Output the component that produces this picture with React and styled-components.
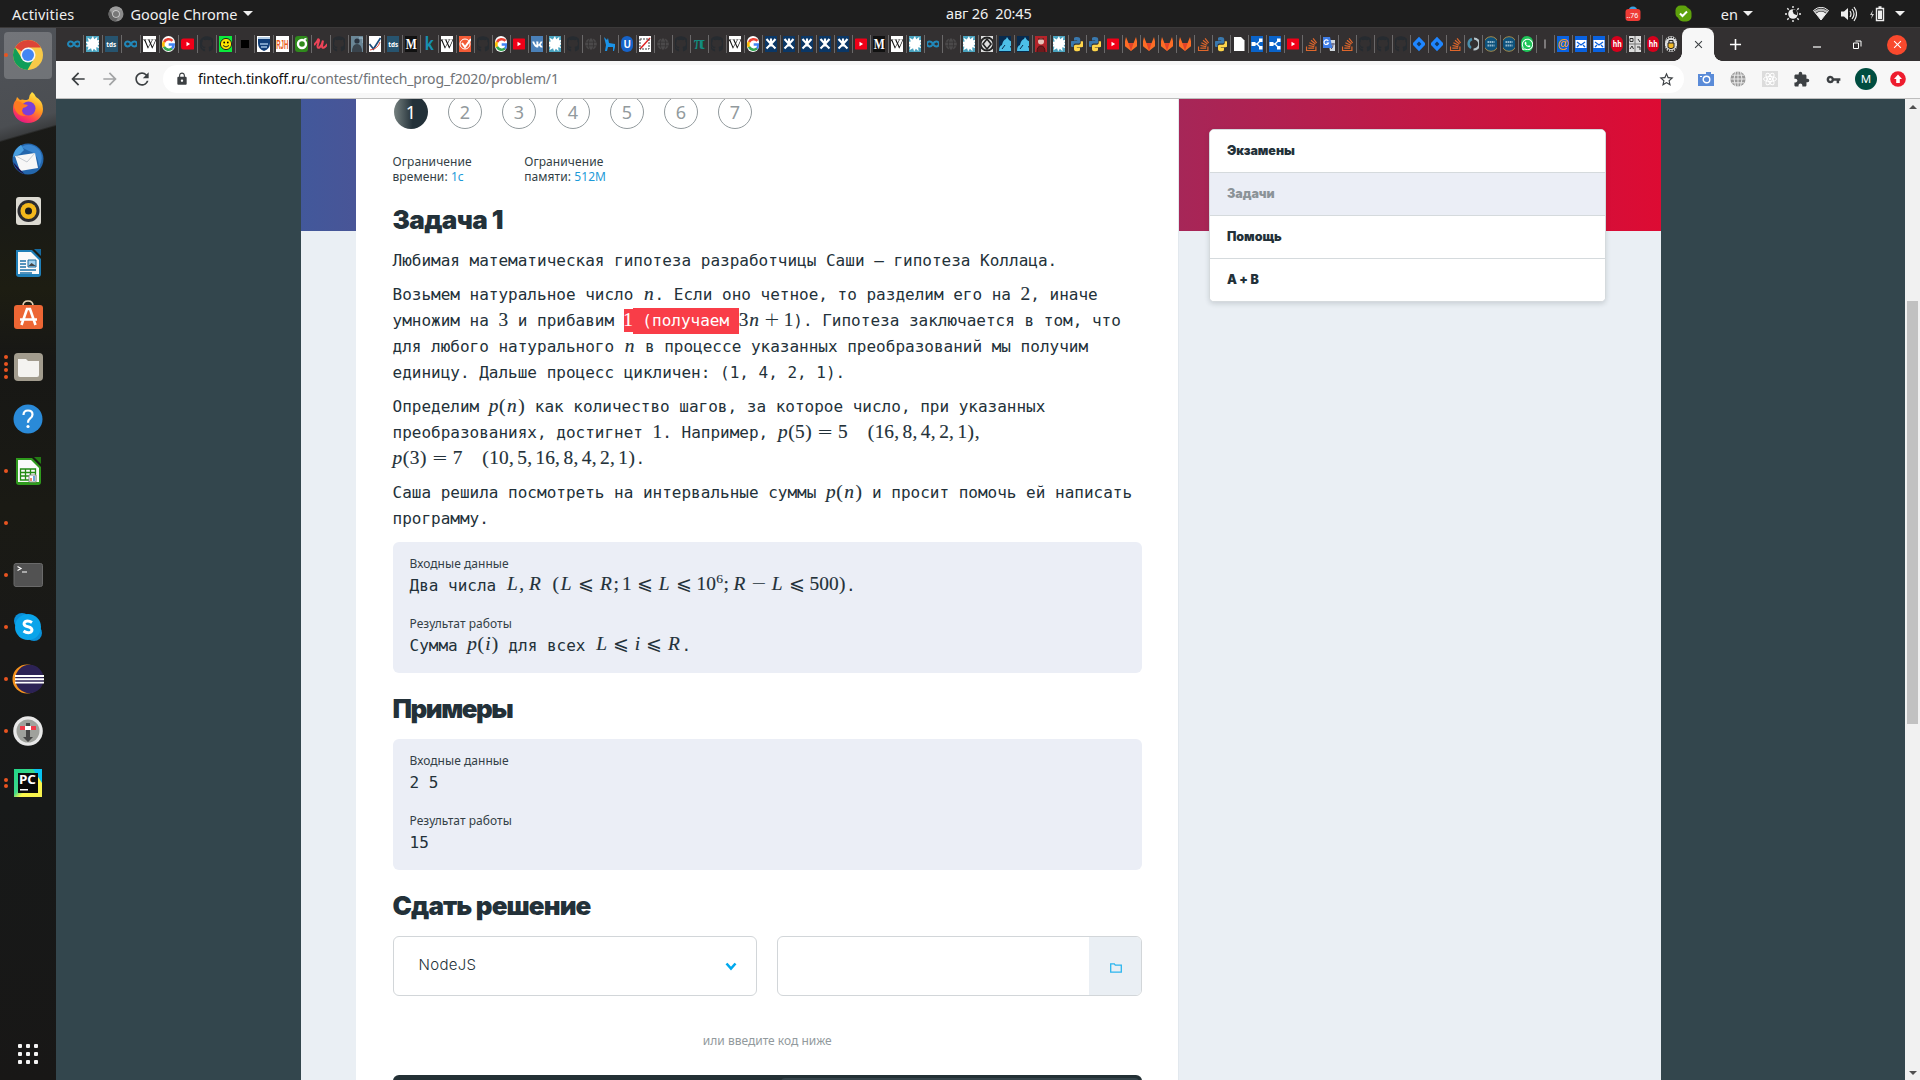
import React from "react";
import styled, { createGlobalStyle, css } from "styled-components";
import {
  FaGithub, FaWhatsapp, FaStackOverflow, FaVk, FaWikipediaW, FaGlobe, FaInfinity,
} from "react-icons/fa";
import {
  MdArrowBack, MdArrowForward, MdRefresh, MdLock, MdStarBorder, MdExtension, MdVpnKey, MdClose, MdAdd,
} from "react-icons/md";

const ui = '"Noto Sans", "Open Sans", sans-serif';
const mono = '"DejaVu Sans Mono", monospace';
const display = 'Inter, "Open Sans", sans-serif';
const serif = '"Liberation Serif", "DejaVu Serif", serif';

const GlobalStyle = createGlobalStyle`
  * { box-sizing: border-box; }
  html, body { margin: 0; padding: 0; overflow: hidden; }
  body { font-family: ${ui}; color: #233139; background: #33464d; }
`;

const Screen = styled.div`
  width: 1920px;
  height: 1080px;
  display: flex;
  flex-direction: column;
  overflow: hidden;
`;

/* ---------- top system bar ---------- */

const TopBar = styled.header`
  height: 28px;
  flex: none;
  display: grid;
  grid-template-columns: 946px auto 1fr;
  background: #1d1d1d;
  border-bottom: 1px solid #3b3939;
  color: #f0f0f0;
  font-size: 14.5px;
  line-height: 26px;
`;
const TopLeft = styled.div`
  display: flex;
  align-items: center;
  padding-left: 12px;
`;
const TopText = styled.span`
  letter-spacing: ${(p) => p.$ls || 0}px;
  margin-left: ${(p) => p.$ml || 0}px;
  white-space: pre;
`;
const TopRight = styled.div`
  display: flex;
  align-items: center;
  justify-content: flex-end;
  padding-right: 15px;
`;
const Slot = styled.span`
  display: flex;
  justify-content: center;
  width: ${(p) => p.$w}px;
  margin-left: ${(p) => p.$ml || 0}px;
  flex: none;
`;
const Caret = styled.i`
  border: 5px solid transparent;
  border-top: 5.5px solid #f0f0f0;
  border-bottom: 0;
  margin-left: ${(p) => p.$ml || 0}px;
`;

/* ---------- dock ---------- */

const Body = styled.div`
  flex: 1;
  display: flex;
  min-height: 0;
`;
const Dock = styled.nav`
  width: 56px;
  flex: none;
  display: flex;
  flex-direction: column;
  padding: 1px 0 12px;
  background:
    linear-gradient(164deg, #505359 0, #4b4e52 96px, #3b3d3f 108px, transparent 110px),
    linear-gradient(#1c1b1a 0, #191a16 180px, #1d1d12 260px, #171715 330px, #1a1a14 480px, #191918 620px, #171919 780px, #181716 100%);
`;
const DockCell = styled.div`
  height: 52px;
  position: relative;
  display: flex;
  align-items: center;
  justify-content: center;
  &::before {
    content: "";
    position: absolute;
    inset: 3px 4px 2px;
    border-radius: 4px;
    background: ${(p) => (p.$active ? "rgba(255,255,255,.2)" : "transparent")};
  }
  svg { position: relative; }
`;
const DockDots = styled.div`
  position: absolute;
  left: 4px;
  top: 0;
  bottom: 0;
  display: flex;
  flex-direction: column;
  justify-content: center;
  gap: 2.2px;
  i { width: 4.4px; height: 4.4px; border-radius: 50%; background: #e95420; }
`;
const AppGrid = styled.div`
  margin: auto auto 4px;
  display: grid;
  grid-template-columns: repeat(3, 4px);
  gap: 4px;
  i { height: 4px; border-radius: 1px; background: #f4f4f4; }
`;

/* ---------- browser chrome ---------- */

const Browser = styled.div`
  flex: 1;
  display: flex;
  flex-direction: column;
  min-width: 0;
`;
const TabStrip = styled.div`
  height: 33px;
  flex: none;
  display: flex;
  align-items: flex-start;
  padding-left: 9px;
  background: #333031;
`;
const TabBox = styled.div`
  width: ${(p) => p.$w}px;
  height: 18px;
  margin-top: 7px;
  flex: none;
  display: flex;
  justify-content: center;
  align-items: center;
  border-right: 1px solid ${(p) => (p.$last ? "transparent" : "#6b696a")};
`;
const Fav = styled.span`
  width: ${(p) => p.$w}px;
  height: 16px;
  margin-right: 1px;
  overflow: hidden;
  display: flex;
  align-items: center;
  justify-content: center;
  flex: none;
  border-radius: ${(p) => p.$r || 0}px;
  background: ${(p) => p.$bg || "transparent"};
  color: ${(p) => p.$c || "#fff"};
  font: ${(p) => p.$font || `700 8px/16px ${ui}`};
  svg { flex: none; display: block; }
`;
const ActiveTab = styled.div`
  width: 32px;
  height: 33px;
  margin-left: 1px;
  flex: none;
  position: relative;
  display: flex;
  align-items: center;
  justify-content: center;
  background: #f7f7f7;
  border-radius: 8px 8px 0 0;
  color: #3c4043;
  &::before, &::after {
    content: "";
    position: absolute;
    bottom: 0;
    width: 8px;
    height: 8px;
  }
  &::before { left: -8px; background: radial-gradient(circle at 0 0, transparent 7.5px, #f7f7f7 8px); }
  &::after { right: -8px; background: radial-gradient(circle at 100% 0, transparent 7.5px, #f7f7f7 8px); }
`;
const NewTab = styled.div`
  width: 43px;
  height: 33px;
  display: flex;
  align-items: center;
  justify-content: center;
  color: #fff;
`;
const WindowButtons = styled.div`
  height: 33px;
  margin-left: auto;
  padding-right: 13px;
  display: flex;
  align-items: center;
  color: #fff;
`;
const Close = styled.span`
  width: 20px;
  height: 20px;
  border-radius: 50%;
  display: flex;
  align-items: center;
  justify-content: center;
  background: #f9492d;
  color: #fff;
`;

const Toolbar = styled.div`
  height: 38px;
  flex: none;
  display: flex;
  align-items: center;
  padding: 0 0 1px 12px;
  background: #f7f7f7;
  border-bottom: 1px solid #bdbdbd;
  color: #3c4043;
`;
const NavButton = styled.span`
  width: 32px;
  height: 20px;
  flex: none;
  display: flex;
  justify-content: flex-start;
  opacity: ${(p) => (p.$off ? 0.45 : 1)};
`;
const Omnibox = styled.div`
  width: 1521px;
  height: 28px;
  flex: none;
  margin-left: -1px;
  border-radius: 14px;
  background: #fff;
  display: flex;
  align-items: center;
  padding: 0 9px 0 12px;
  font-size: 14px;
  line-height: 28px;
`;
const Url = styled.span`
  flex: 1;
  margin-left: 9px;
  color: #6f7377;
  letter-spacing: -0.15px;
  b { font-weight: 400; color: #111; }
`;
const Ext = styled.span`
  width: ${(p) => p.$w || 32}px;
  display: flex;
  align-items: center;
  justify-content: center;
  flex: none;
`;
const Avatar = styled.span`
  width: 22px;
  height: 22px;
  border-radius: 50%;
  background: #004d40;
  color: #fff;
  font-size: 11.5px;
  line-height: 22px;
  text-align: center;
`;

/* ---------- page ---------- */

const View = styled.main`
  flex: 1;
  display: flex;
  min-height: 0;
  background: #33464d;
`;
const Site = styled.div`
  width: 1360px;
  margin-left: 245px;
  display: flex;
  background:
    linear-gradient(90deg, #42589b, #dd0b33) no-repeat 0 0 / 100% 132px,
    #eaeff4;
  overflow: hidden;
`;
const Article = styled.article`
  width: 823px;
  margin-left: 55px;
  padding: 0 37px 0 36.5px;
  background: #fff;
  border-right: 1px solid #e2e8ee;
  flex: none;
`;
const Steps = styled.div`
  display: flex;
  gap: 20px;
  margin: -4px 0 0 1.5px;
`;
const Step = styled.span`
  width: 34px;
  height: 34px;
  border-radius: 50%;
  border: 1px solid ${(p) => (p.$on ? "transparent" : "#929a9d")};
  background: ${(p) => (p.$on ? "linear-gradient(90deg, #75807f, #233139 55%) border-box" : "#fff")};
  color: ${(p) => (p.$on ? "#fff" : "#929a9d")};
  font-size: 18px;
  line-height: 32px;
  text-align: center;
`;
const Limits = styled.div`
  display: flex;
  margin-top: 25px;
  font-size: 12px;
  line-height: 15px;
  letter-spacing: 0.08px;
  color: #333f46;
  div { width: 131.7px; }
  em { font-style: normal; color: #1d9ad8; }
`;
const Title = styled.h2`
  margin: ${(p) => p.$mt}px 0 ${(p) => p.$mb || 0}px;
  font: 900 26px/32px ${display};
  letter-spacing: ${(p) => p.$ls}px;
  color: #233139;
  white-space: nowrap;
`;
const Para = styled.p`
  margin: 0 0 8px;
  font: 16px/26px ${mono};
  color: #233139;
`;
const Line = styled.span`
  display: block;
  height: 26px;
  white-space: pre;
`;
const Marked = styled.span`
  display: inline-block;
  height: 26px;
  vertical-align: top;
  background: #f93d48;
  color: #fff;
`;
const MarkedDigit = styled.span`
  display: inline-block;
  height: 23px;
  width: 9px;
  margin-top: 1px;
  vertical-align: top;
  background: #f93d48;
  color: #fff;
  > span { margin: -1px 0 0 -0.5px; }
`;
const MathBox = styled.span`
  display: inline-block;
  height: 26px;
  vertical-align: top;
  font: 19.36px/24px ${serif};
  -webkit-text-stroke: 0.15px currentColor;
`;
const Atom = styled.span`
  display: inline-block;
  width: ${(p) => p.$w}em;
  text-align: center;
  height: 26px;
  vertical-align: top;
  ${(p) => p.$it && css`font-style: italic;`}
  ${(p) => p.$op && css`font-size: 19.36px; font-family: "DejaVu Sans", sans-serif; font-weight: 200; -webkit-text-stroke: 0;`}
  ${(p) => p.$sup && css`font-size: 13.5px; width: 0.57em; line-height: 13px;`}
`;
const Gap = styled.span`
  display: inline-block;
  width: ${(p) => p.$w}em;
`;

const Box = styled.section`
  height: 131px;
  margin-top: ${(p) => p.$mt}px;
  width: 749.5px;
  border-radius: 6px;
  background: #ebeef6;
  padding: 14px 17px 0;
`;
const Field = styled.div`
  height: 60px;
`;
const Label = styled.div`
  font-size: 12px;
  line-height: 16px;
  letter-spacing: 0.05px;
  color: #333f46;
`;
const Value = styled.div`
  font: 16px/28px ${mono};
  height: 26px;
  white-space: pre;
`;
const Controls = styled.div`
  display: flex;
  gap: 20px;
  width: 749.5px;
  margin-top: 14px;
`;
const Input = styled.div`
  flex: 1;
  height: 60px;
  display: flex;
  align-items: center;
  border: 1px solid #d2d6d9;
  border-radius: 6px;
  background: #fff;
  overflow: hidden;
`;
const Selected = styled.span`
  flex: 1;
  padding-left: 25px;
  font: 300 15px/58px ${display};
  letter-spacing: 0.3px;
  margin-top: -3px;
  color: #233139;
`;
const Chevron = styled.span`
  width: 51px;
  display: flex;
  justify-content: center;
  padding-top: 1px;
`;
const FileButton = styled.span`
  margin-left: auto;
  width: 52px;
  height: 58px;
  background: #eaeff4;
  display: flex;
  align-items: center;
  justify-content: center;
  padding: 3px 0 0 2px;
`;
const Hint = styled.div`
  margin-top: 37px;
  width: 749.5px;
  text-align: center;
  font-size: 12px;
  line-height: 16px;
  color: #929a9d;
`;
const Editor = styled.div`
  margin-top: 26px;
  width: 749.5px;
  height: 60px;
  border-radius: 6px;
  background: #233035;
  padding: 3px 3px 0 388px;
  overflow: hidden;
`;
const EditorPanel = styled.div`
  height: 60px;
  border-radius: 4px 4px 0 0;
  background: #35434a;
`;

const Menu = styled.ul`
  width: 397px;
  height: 173px;
  margin: 30px 0 0 30px;
  padding: 0;
  list-style: none;
  border: 1px solid #d5dadd;
  border-radius: 5px;
  overflow: hidden;
  background: #fff;
  box-shadow: 0 2px 5px rgba(35, 49, 57, 0.16);
`;
const MenuItem = styled.li`
  height: 43px;
  padding-left: 17px;
  border-bottom: 1px solid #d5dadd;
  font: 900 12.5px/42px ${display};
  letter-spacing: -0.05px;
  background: ${(p) => (p.$on ? "#ebeef6" : "#fff")};
  color: ${(p) => (p.$on ? "#8b9398" : "#233139")};
  &:last-child { border-bottom: 0; }
`;
const Scroll = styled.div`
  width: 15px;
  margin-left: auto;
  background: #f1f1f1;
  display: flex;
  flex-direction: column;
  align-items: center;
  padding: 6px 0 5px;
`;
const Tri = styled.i`
  border: 4px solid transparent;
  ${(p) => (p.$up ? "border-bottom-color: #505050; border-top: 0;" : "border-top-color: #505050; border-bottom: 0; margin-top: auto;")}
`;
const Thumb = styled.div`
  width: 11px;
  height: 423px;
  margin-top: 192px;
  background: #c1c1c1;
`;

/* ---------- favicons ---------- */

const Svg = ({ s = 16, children, vb = "0 0 16 16" }) => (
  <svg width={s} height={s} viewBox={vb}>{children}</svg>
);
const Word = ({ children, size, y, w, family = "Liberation Sans" }) => (
  <svg width="12.500" height="16" viewBox="0 0 12.500 16">
    <text x={(12.5 - w) / 2} y={y} fontSize={size} fontWeight="700" fontFamily={family} fill="currentColor" textLength={w} lengthAdjust="spacingAndGlyphs">{children}</text>
  </svg>
);
const favs = {
  oo: { el: <FaInfinity size={14} color="#2287b8" /> },
  splat: { bg: "#4aa3bf", el: <Svg vb="1.500 1.500 13 13"><path d="M8 1.500l1 2.700 2.600-2-.4 2.800 3-.6-2 2.300 2.300 1.500-2.800.7 1.800 2.600-2.900-.9.300 3.200-2.200-2L7.300 14l-.9-2.500-2.900 1.600.8-2.900L1.500 10l2.200-1.700L1.600 6.200l3-.2L3.500 3l2.700 1.300z" fill="#fff" /></Svg> },
  tds: { bg: "#27546f", el: <Word size={7.500} y={10.500} w={10} family="Noto Sans">tds</Word> },
  W: { bg: "#fff", c: "#111", el: <FaWikipediaW size={14} /> },
  G: { bg: "#fff", r: 7, el: <Svg s={15}><g fill="none" strokeWidth="2.800"><path d="M12.200 4.200A5.500 5.500 0 0 0 3.200 5.400" stroke="#ea4335" /><path d="M3.200 5.300a5.500 5.500 0 0 0 0 5.400" stroke="#fbbc05" /><path d="M3.200 10.600a5.500 5.500 0 0 0 8.600 1.500" stroke="#34a853" /><path d="M11.700 12.200A5.500 5.500 0 0 0 13.500 8H8.200" stroke="#4285f4" /></g></Svg> },
  yt: { el: <Svg><rect x="1" y="2.500" width="14" height="11" rx="2.500" fill="#f00018" /><path d="M6.500 5.800v4.400l3.600-2.200z" fill="#fff" /></Svg> },
  gh: { c: "#262b30", el: <FaGithub size={16} /> },
  smile: { bg: "#0bea3c", el: <Svg><circle cx="8" cy="8" r="5.600" fill="#ffe600" stroke="#222" /><circle cx="6.200" cy="6.500" r=".9" /><circle cx="9.800" cy="6.500" r=".9" /><path d="M5 9.500q3 3 6 0" fill="none" stroke="#222" /></Svg> },
  black: { el: <Svg><path d="M4 4h8v8H4z" /></Svg> },
  badge: { bg: "#fff", el: <Svg><path d="M2 3h12v4q0 6-6 8-6-2-6-8z" fill="#123f78" /><path d="M2 2h12M4 8h8M5 11h6" stroke="#9fc0df" strokeWidth="1.600" /></Svg> },
  rjk: { bg: "#fff", c: "#ea5b1c", el: <Word size={13} y={12.500} w={12.200}>RJH</Word> },
  q: { bg: "#2f8a1c", r: 3, el: <Svg><circle cx="8" cy="8" r="4" fill="none" stroke="#fff" strokeWidth="2.400" /><path d="M10 3.500l2.500-1" stroke="#fff" strokeWidth="1.500" /></Svg> },
  u: { c: "#ec4458", el: <Svg><path d="M1.500 8.500Q4 6 5 3.500 6 3 6 4.500L4.500 10q0 2.500 2 1.500 2.500-2 3.500-7l-1 5.500q0 2.500 2 1.500 2-1 3-3" fill="none" stroke="#ec4458" strokeWidth="2" strokeLinecap="round" /></Svg> },
  doc: { bg: "#6b8797", el: <Svg><circle cx="8" cy="5" r="2.600" fill="#2b3440" /><path d="M3 16q0-8 5-8t5 8z" fill="#39434c" /><path d="M10 2h4v5" stroke="#a8c4d4" fill="none" /></Svg> },
  chk: { bg: "#fff", el: <Svg><path d="M2.500 8l4 5 7-11" fill="none" stroke="#194a7a" strokeWidth="1.700" /><path d="M3 14q8-1 10-8" fill="none" stroke="#e34a3a" /></Svg> },
  M: { bg: "#111", el: <Word size={14} y={12.500} w={11} family="Liberation Serif">M</Word> },
  k: { c: "#168fb0", el: <Word size={17} y={13.500} w={9} family="Noto Sans">k</Word> },
  ya: { bg: "#f35b36", el: <Svg><circle cx="8" cy="8" r="5" fill="none" stroke="#fff" /><path d="M5 7l3 4 6-8" fill="none" stroke="#fff" strokeWidth="2" /></Svg> },
  vk: { bg: "#4a80b8", el: <FaVk size={11} /> },
  globe: { c: "#4b494a", el: <FaGlobe size={12} /> },
  deer: { el: <Svg><path d="M3 1l3 3 1-2 1 5 6 1v3l-1 4h-1v-4H7l-1 4H4l1-6-1-4z" fill="#1a93e8" /></Svg> },
  shield: { bg: "#1763c8", r: 7, el: <Word size={10} y={11.500} w={7}>U</Word> },
  slash: { bg: "#fff", el: <Svg><path d="M3 13L13 2" stroke="#d22" strokeWidth="1.500" /><path d="M3 3h9v10H3z" fill="none" stroke="#444" strokeDasharray="2 1" /></Svg> },
  pi: { c: "#128a7e", el: <Word size={19} y={13} w={11} family="Liberation Serif">π</Word> },
  X: { bg: "#0b3766", el: <Svg><path d="M8 8L3.500 3M8 8l4.500-5M8 8l-4.500 4.500M8 8l4.500 4.500M8 2.500v8" stroke="#fff" strokeWidth="2.100" /></Svg> },
  spiral: { bg: "#ddd", el: <Svg><circle cx="8" cy="8" r="6.500" fill="none" stroke="#222" strokeWidth="2" /><path d="M8 3l4 5-4 5-4-5z" fill="none" stroke="#222" strokeWidth="1.600" /></Svg> },
  horse: { bg: "#082a4d", el: <Svg><path d="M2 15q0-5 3-6 1-5 4-6l1-2 2 3 3 2v4h-2l2 5z" fill="#4cbfe8" /><path d="M5 13l3-4" stroke="#082a4d" /></Svg> },
  red: { bg: "#b5242a", el: <Svg><circle cx="8" cy="5.500" r="3" fill="#e6c2b8" /><path d="M4 16q0-6 4-6t4 6M5 3h6" stroke="#411" fill="#6d1a1d" /></Svg> },
  py: { el: <Svg><path d="M8 1c-3 0-3 1-3 2v1.500h3.200V5H3.500C1.800 5 1 6.300 1 8s.8 3 2.200 3H4.500V9.500C4.500 8 5.500 7.500 7 7.500h2.500c1.200 0 1.700-.8 1.700-1.800V3c0-1.300-1.200-2-3.200-2z" fill="#3a78ad" /><path d="M8 15.300c3 0 3-1 3-2v-1.500H7.800v-.5h4.700C14.200 11.300 15 10 15 8.200s-.8-3-2.200-3h-1.100v1.500c0 1.500-1 2-2.500 2H6.700C5.500 8.700 5 9.500 5 10.500v2.700c0 1.300 1.200 2.100 3 2.100z" fill="#ffd54a" /></Svg> },
  fox: { el: <Svg><path d="M8 15L1 9.500 3 1l2.400 6h5.200L13 1l2 8.500z" fill="#fc6d26" /><path d="M8 15L5.400 7h5.200z" fill="#e24329" /></Svg> },
  so: { c: "#e0672c", el: <FaStackOverflow size={15} /> },
  page: { el: <Svg><path d="M3 1h7l3.500 3.500V15H3z" fill="#fff" /></Svg> },
  share: { bg: "#0a63c9", el: <Svg><path d="M4 8h4l4-4M8 8l4 4" stroke="#fff" fill="none" strokeWidth="1.300" /><path d="M2.500 6h4v4h-4zM10 2.500h3.500V6H10zM10 10h3.500v3.500H10z" fill="#fff" /></Svg> },
  tr: { el: <Svg><path d="M7 4h7.500v11H9z" fill="#cfd6dd" /><path d="M1 1h8l2.500 11H1z" fill="#3f7ee8" /><path d="M7.300 5A2.300 2.300 0 1 0 7.500 7H5.500" stroke="#fff" fill="none" strokeWidth="1.200" /><path d="M10 8h4M12 7v2q0 3-2 4" stroke="#557" fill="none" /></Svg> },
  jira: { el: <Svg><path d="M8 .8L15 8l-7 7.200L1 8z" fill="#1f86ff" /><path d="M8 5.500L10.400 8 8 10.500 5.600 8z" fill="#123a66" /></Svg> },
  ring: { el: <Svg><path d="M7 3a5 5 0 0 0-1 9" fill="none" stroke="#4a90ad" strokeWidth="2.400" /><path d="M9 2.500a5.500 5.500 0 0 1-.5 11" fill="none" stroke="#b8c6cc" strokeWidth="2.200" /></Svg> },
  data: { el: <Svg><circle cx="8" cy="8" r="7.300" fill="#0d527c" stroke="#a48a4c" /><path d="M4.500 6h7M4.500 9.500h7" stroke="#8fb4ca" strokeWidth="2" strokeDasharray="1.600 .5" /></Svg> },
  wa: { bg: "#1fc659", r: 6, el: <FaWhatsapp size={13} /> },
  bar: { el: <Svg><path d="M7.300 3.500h1.400v9H7.300z" fill="#9b999a" /></Svg> },
  at: { bg: "#0a62e0", c: "#f9a01b", el: <Word size={13} y={12} w={11.500}>@</Word> },
  mail: { bg: "#0a62e0", el: <Svg><path d="M2.500 4h11v8h-11z" fill="#fff" /><path d="M4 6l4 3 4-3M4 11l2-2M12 11l-2-2" stroke="#0a62e0" strokeWidth="1.300" fill="none" /></Svg> },
  hh: { bg: "#d6001c", r: 6, el: <Word size={9.500} y={11} w={9} family="Noto Sans">hh</Word> },
  chess: { bg: "#dcdcdc", el: <Svg><path d="M8 0v16M0 8h16" stroke="#777" /><path d="M3 2.500h3v3H3zM11 3l2 3M10 11h3v3M3 13l2-3 1.500 3" stroke="#333" fill="none" /></Svg> },
  lion: { bg: "#ddd", r: 6, el: <Svg><circle cx="8" cy="8" r="6.800" fill="#ddd" stroke="#222" strokeWidth="1.500" strokeDasharray="1.500 1" /><path d="M5 7h6v4.500q-3 2.500-6 0z" fill="#f2b927" stroke="#222" /><path d="M6 7V4.500h4V7" fill="none" stroke="#222" /></Svg> },
};
const wideTabs = "oo splat tds oo W G yt gh smile black badge rjk q u".split(" ");
const narrowTabs = (
  "gh doc chk tds M k W ya gh G yt vk splat gh globe deer shield slash globe gh pi gh W G X X X X X yt M W splat oo globe " +
  "splat spiral horse horse red splat py py yt fox fox fox fox so py page share share yt so tr so gh gh gh jira jira so ring " +
  "data data wa bar at mail mail hh chess hh lion"
).split(" ");

const Tab = ({ name, wide, last }) => {
  const f = favs[name];
  return (
    <TabBox $w={wide ? 19 : 18} $last={last}>
      <Fav $w={wide ? 13.5 : 12.5} $bg={f.bg} $c={f.c} $r={f.r}>{f.el}</Fav>
    </TabBox>
  );
};

/* ---------- dock icons ---------- */

const I = ({ children, w = 32 }) => <svg width={w} height={w} viewBox="0 0 32 32">{children}</svg>;
const ChromeMark = ({ s, g }) => (
  <svg width={s} height={s} viewBox="0 0 32 32">
    <circle cx="16" cy="16" r="15" fill={g ? "#8b8b8b" : "#f7c948"} />
    <path d="M16 16L3 8.500A15 15 0 0 1 29 8.500H16z" fill={g ? "#9c9c9c" : "#dc4437"} />
    <path d="M3 8.500A15 15 0 0 0 15.500 31L22 19.500 16 16 9.800 19.300z" fill={g ? "#666" : "#109d58"} />
    <circle cx="16" cy="16" r="7.500" fill={g ? "#d8d8d8" : "#f5f5f5"} />
    <circle cx="16" cy="16" r="6" fill={g ? "#777" : "#4285f4"} />
  </svg>
);
const dock = [
  { dots: 1, active: true, el: <ChromeMark s={32} /> },
  { el: <I><defs><linearGradient id="ff" x1=".8" y1="0" x2=".3" y2="1"><stop offset="0" stopColor="#fff04a" /><stop offset=".45" stopColor="#ff9a1f" /><stop offset=".75" stopColor="#ff4350" /><stop offset="1" stopColor="#e31587" /></linearGradient></defs><path d="M20 1q3 2 4 5 7 4 7 12a15 14 0 0 1-30 0q0-6 3-9l1-3 3 3q2-1 5 0 4 0 4-2 0-3 3-6z" fill="url(#ff)" /><circle cx="16.500" cy="17.500" r="7" fill="#7a3fd8" /><path d="M3 10q6 0 8 3l5 1q-2 3-5 3-3 6 3 8-9 1-12-9z" fill="#ff7a20" /></I> },
  { el: <I><circle cx="16" cy="16" r="15.500" fill="#2467ad" /><path d="M9 4Q20-2 28 8q4 8-1 16-1-14-10-16z" fill="#3a86d0" /><path d="M3 13l20-3 3 15-18 3z" fill="#f7f7f7" /><path d="M4 13l11 6 8-9" fill="none" stroke="#c7ccd2" /><path d="M1 14q2-9 8-12l3 5-4 4z" fill="#4aa0e0" /><path d="M1 19q3 9 12 12.500l-4-4z" fill="#1b1250" /></I> },
  { el: <I><rect x="4" y="2" width="25" height="28" rx="3" fill="#dcdad2" /><circle cx="16.500" cy="16" r="11" fill="#2b2b30" /><circle cx="16.500" cy="16" r="8" fill="#f4b81c" /><circle cx="16.500" cy="16" r="3.500" fill="#1d1d1d" /></I> },
  { el: <I><path d="M4 3h16l9 9v15q0 3-3 3H7q-3 0-3-3z" fill="#1f7fb8" /><path d="M6 5h13l8 8v14H6z" fill="#fafafa" /><path d="M22 2h7v7z" fill="#176a9e" /><path d="M8 14h6M8 17h6M8 20h6M8 23h16M8 26h12" stroke="#1c72a8" strokeWidth="1.300" /><path d="M16 13h8v7h-8z" fill="#9fd0ee" stroke="#1b6a9c" /><path d="M16.500 19l3-3 4.500 3z" fill="#444" /></I> },
  { el: <I><path d="M11 7q0-5 5-5t5 5" fill="none" stroke="#e7d3b6" strokeWidth="1.600" /><rect x="2" y="6" width="29" height="24" rx="3" fill="#ed6634" /><path d="M9.500 26L15 10h3l5.500 16M8 20.500h17" fill="none" stroke="#fff" strokeWidth="2.600" /></I> },
  { dots: 4, el: <I><rect x="2" y="2" width="29" height="28" rx="4" fill="#a29c8e" /><path d="M6 8h8l2 2h11v14q0 2-2 2H8q-2 0-2-2z" fill="#f4f3f0" /></I> },
  { el: <I><circle cx="16" cy="16" r="14.500" fill="#2a8ad8" /><path d="M11.500 12q0-4.500 4.500-4.500t4.500 4q0 2.500-2.500 4.200-2 1.500-2 4" fill="none" stroke="#fff" strokeWidth="2.200" /><circle cx="16" cy="23.500" r="1.600" fill="#fff" /></I> },
  { dots: 1, el: <I><path d="M4 3h16l9 9v15q0 3-3 3H7q-3 0-3-3z" fill="#2f9a1d" /><path d="M6 5h13l8 8v14H6z" fill="#fafafa" /><path d="M22 2h7v7z" fill="#237a14" /><path d="M8.500 14h15v11h-15zM8.500 17.500h15M8.500 21h15M13.500 14v11M18.500 14v11" stroke="#238a14" strokeWidth="1.300" fill="none" /><path d="M17 20h7v7h-7z" fill="#fff" stroke="#888" /><path d="M19 26v-3" stroke="#e4572e" strokeWidth="1.400" /><path d="M22 26v-5" stroke="#2c7fd0" strokeWidth="1.400" /></I> },
  { dots: 1 },
  { dots: 1, el: <I><rect x="2" y="4.500" width="28.500" height="23" rx="2" fill="#525252" stroke="#6a6a6a" /><path d="M5.500 7.500l3.500 2-3.500 2M10 13h5" fill="none" stroke="#fff" strokeWidth="1.200" /></I> },
  { dots: 1, el: <I><circle cx="10" cy="10" r="8" fill="#0a8fd8" /><circle cx="22" cy="22" r="8" fill="#0a8fd8" /><circle cx="16" cy="16" r="13" fill="#0aa4ea" /><path d="M20 11.500q-4-2.600-7-.8-2.400 2.700 1 4.500l4 1.200q3.400 2 1 4.600-3.500 1.800-7.500-1" fill="none" stroke="#fff" strokeWidth="3" /></I> },
  { dots: 1, el: <I><circle cx="15" cy="16" r="14.500" fill="#f7941e" /><circle cx="17.500" cy="16" r="14.200" fill="#2c2255" /><path d="M3 13h29M3 16.300h29M3 19.600h29" stroke="#fff" strokeWidth="1.900" /></I> },
  { dots: 1, el: <I><circle cx="16" cy="16" r="14.800" fill="#e8e8e8" /><circle cx="16" cy="16" r="11.500" fill="#9fa19c" /><path d="M14 8h4v14h3l-5 5-5-5h3z" fill="#454545" /><path d="M8 11h16v4H8z" fill="#ee3b4a" /><path d="M13 11h6v4h-6z" fill="#fff" /></I> },
  { dots: 2, el: <svg width="28" height="28" viewBox="0 0 28 28"><defs><linearGradient id="pc" x1="0" y1="0" x2="1" y2="1"><stop offset="0" stopColor="#21d789" /><stop offset=".45" stopColor="#3fd88a" /><stop offset=".6" stopColor="#fcf84a" /><stop offset="1" stopColor="#f5f04e" /></linearGradient></defs><path d="M0 0h28v28H0z" fill="url(#pc)" /><path d="M19 0h9v14z" fill="#07c3f2" /><path d="M4 4h20v20H4z" fill="#0a0a0a" /><text x="5" y="14.500" fontSize="11.500" fontWeight="700" fill="#fff" fontFamily="Noto Sans" textLength="17" lengthAdjust="spacingAndGlyphs">PC</text><path d="M6 20h8v1.500H6z" fill="#fff" /></svg> },
];

/* ---------- math typesetting ---------- */

const widths = { n: 0.6, p: 0.503, i: 0.345, L: 0.681, R: 0.767, "(": 0.389, ")": 0.389, ",": 0.278, ";": 0.278 };
const Formula = ({ children }) => (
  <MathBox>
    {children.split("").map((ch, k) => {
      if (ch === "_") return <Gap key={k} $w={1} />;
      if (ch === "~") return <Gap key={k} $w={0.497} />;
      if (ch === "'") return <Gap key={k} $w={0.167} />;
      if (ch === "^") return <Atom key={k} $sup>6</Atom>;
      if ("=⩽".includes(ch)) return <Atom key={k} $w={1.334} $op>{ch}</Atom>;
      if ("+−".includes(ch)) return <Atom key={k} $w={1.222} $op>{ch}</Atom>;
      return <Atom key={k} $w={widths[ch] || 0.5} $it={/[a-zA-Z]/.test(ch)}>{ch}</Atom>;
    })}
  </MathBox>
);

export default function App() {
  return (
    <>
      <GlobalStyle />
      <Screen>
        <TopBar>
          <TopLeft>
            <TopText $ls={0.2}>Activities</TopText>
            <Slot $w={16} $ml={34}><ChromeMark s={16} g /></Slot>
            <TopText $ml={6}>Google Chrome</TopText>
            <Caret $ml={6} />
          </TopLeft>
          <TopText $ls={-0.15}>авг 26  20:45</TopText>
          <TopRight>
            <Slot $w={51}><svg width="16" height="16" viewBox="0 0 16 16"><circle cx="8" cy="5" r="4.500" fill="#3aa0e0" /><rect x=".5" y="3" width="15" height="12" rx="3" fill="#ee3b35" /><text x="1.500" y="12" fontSize="7" fill="#fff" fontFamily="Noto Sans">..76</text></svg></Slot>
            <Slot $w={50}><svg width="17" height="17" viewBox="0 0 17 17"><rect x=".5" y=".5" width="13" height="13" rx="5" fill="#5ea20c" /><rect x="3" y="3" width="13.500" height="13.500" rx="5" fill="#5ea20c" /><path d="M5 8.500l2.500 2.500L12 6.500" stroke="#fff" strokeWidth="2" fill="none" /></svg></Slot>
            <TopText $ml={12}>en</TopText>
            <Caret $ml={5} />
            <Slot $w={16} $ml={32}><svg width="16" height="16" viewBox="0 0 16 16"><path d="M8 0v2M8 14v2M0 8h2M14 8h2M2.300 2.300l1.400 1.400M12.300 12.300l1.400 1.400M2.300 13.700l1.400-1.400M12.300 3.700l1.400-1.400" stroke="#eee" strokeWidth="1.400" /><circle cx="8" cy="8" r="4.800" fill="#eee" /><path d="M8 3.500A4 4 0 0 0 12 9a5 5 0 0 0-1-5z" fill="#1d1d1d" /></svg></Slot>
            <Slot $w={28} $ml={6}><svg width="16" height="13" viewBox="0 0 16 13"><path d="M8 13L.5 3.500Q8-3 15.500 3.500z" fill="none" stroke="#eee" strokeWidth="1" /><path d="M8 13L3 6.500q5-4 10 0z" fill="#eee" /><path d="M8 13L1 4Q8-1 15 4l-1.500 2Q8 2 2.500 6z" fill="#eee" opacity=".75" /></svg></Slot>
            <Slot $w={28}><svg width="16" height="16" viewBox="0 0 16 16"><path d="M0 5.500h3L7 2v12l-4-3.500H0z" fill="#eee" /><path d="M9 5q2 3 0 6M11 3q4 5 0 10M13 1q5 7 0 14" stroke="#eee" strokeWidth="1.200" fill="none" /></svg></Slot>
            <Slot $w={27}><svg width="16" height="16" viewBox="0 0 16 16"><path d="M4 4L1 9h2l-1 4 3-5H3z" fill="#ccc" /><path d="M7.500 2.500h7v12h-7zM9.500 1h3" stroke="#eee" strokeWidth="1.400" fill="none" /><path d="M9 4.500h4v8.500H9z" fill="#eee" /></svg></Slot>
            <Caret $ml={5} />
          </TopRight>
        </TopBar>

        <Body>
          <Dock>
            {dock.map((d, k) => (
              <DockCell key={k} $active={d.active}>
                {d.dots && <DockDots>{Array.from({ length: d.dots }, (_, j) => <i key={j} />)}</DockDots>}
                {d.el}
              </DockCell>
            ))}
            <AppGrid>{Array.from({ length: 9 }, (_, j) => <i key={j} />)}</AppGrid>
          </Dock>

          <Browser>
            <TabStrip>
              {wideTabs.map((n, k) => <Tab key={k} name={n} wide />)}
              {narrowTabs.map((n, k) => <Tab key={k} name={n} last={k === narrowTabs.length - 1} />)}
              <ActiveTab><MdClose size={13} /></ActiveTab>
              <NewTab><MdAdd size={19} /></NewTab>
              <WindowButtons>
                <Slot $w={40}><svg width="8" height="12" viewBox="0 0 8 12"><path d="M0 8h8" stroke="#fff" strokeWidth="1.200" /></svg></Slot>
                <Slot $w={40}><svg width="9" height="9" viewBox="0 0 9 9"><path d="M.5 3h5v5.500h-5zM2.500 1H8v5.500" fill="none" stroke="#fff" /></svg></Slot>
                <Slot $w={10} />
                <Close><MdClose size={13} /></Close>
              </WindowButtons>
            </TabStrip>

            <Toolbar>
              <NavButton><MdArrowBack size={20} /></NavButton>
              <NavButton $off><MdArrowForward size={20} /></NavButton>
              <NavButton><MdRefresh size={20} /></NavButton>
              <Omnibox>
                <MdLock size={14} />
                <Url><b>fintech.tinkoff.ru</b>/contest/fintech_prog_f2020/problem/1</Url>
                <MdStarBorder size={17} />
              </Omnibox>
              <Ext $w={43}><svg width="16" height="14" viewBox="0 0 16 14"><path d="M0 2h8V0h5v2h3v12H0z" fill="#5a8bd8" /><circle cx="8.500" cy="7.500" r="3.300" fill="none" stroke="#fff" strokeWidth="1.400" /><path d="M2 4.500h2" stroke="#fff" /></svg></Ext>
              <Ext $w={21}><svg width="16" height="16" viewBox="0 0 16 16"><circle cx="8" cy="8" r="7.600" fill="#9a9a9a" /><path d="M8 0v16M0 8h16M2 4.200h12M2 11.800h12M5.500 1q-3 7 0 14M10.500 1q3 7 0 14" stroke="#f1f1f1" fill="none" strokeWidth=".9" /></svg></Ext>
              <Ext $w={43}><svg width="16" height="16" viewBox="0 0 16 16"><path d="M0 0h16v16H0z" fill="#dcdcdc" /><g fill="none" stroke="#fff"><ellipse cx="8" cy="8" rx="6.500" ry="2.500" /><ellipse cx="8" cy="8" rx="6.500" ry="2.500" transform="rotate(60 8 8)" /><ellipse cx="8" cy="8" rx="6.500" ry="2.500" transform="rotate(120 8 8)" /></g><circle cx="8" cy="8" r="1.300" fill="#fff" /></svg></Ext>
              <Ext $w={21}><MdExtension size={17} /></Ext>
              <Ext $w={43}><MdVpnKey size={15} /></Ext>
              <Ext $w={22}><Avatar>M</Avatar></Ext>
              <Ext $w={42}><svg width="16" height="16" viewBox="0 0 16 16"><circle cx="8" cy="8" r="7.800" fill="#ee1c2e" /><path d="M8 3.500l4 4.500H9.800v4H6.200V8H4z" fill="#fff" /></svg></Ext>
            </Toolbar>

            <View>
              <Site>
                <Article>
                  <Steps>
                    {[1, 2, 3, 4, 5, 6, 7].map((n) => <Step key={n} $on={n === 1}>{n}</Step>)}
                  </Steps>
                  <Limits>
                    <div>Ограничение<br />времени: <em>1с</em></div>
                    <div>Ограничение<br />памяти: <em>512M</em></div>
                  </Limits>
                  <Title $mt={20} $mb={12} $ls={-0.6}>Задача 1</Title>
                  <Para><Line>Любимая математическая гипотеза разработчицы Саши — гипотеза Коллаца.</Line></Para>
                  <Para>
                    <Line>Возьмем натуральное число <Formula>n</Formula>. Если оно четное, то разделим его на <Formula>2</Formula>, иначе</Line>
                    <Line>умножим на <Formula>3</Formula> и прибавим <MarkedDigit><Formula>1</Formula></MarkedDigit><Marked> (получаем </Marked><Formula>3n+1</Formula>). Гипотеза заключается в том, что</Line>
                    <Line>для любого натурального <Formula>n</Formula> в процессе указанных преобразований мы получим</Line>
                    <Line>единицу. Дальше процесс цикличен: (1, 4, 2, 1).</Line>
                  </Para>
                  <Para>
                    <Line>Определим <Formula>p(n)</Formula> как количество шагов, за которое число, при указанных</Line>
                    <Line>преобразованиях, достигнет <Formula>1</Formula>. Например, <Formula>p(5)=5_(16,'8,'4,'2,'1),</Formula></Line>
                    <Line><Formula>p(3)=7_(10,'5,'16,'8,'4,'2,'1)</Formula>.</Line>
                  </Para>
                  <Para>
                    <Line>Саша решила посмотреть на интервальные суммы <Formula>p(n)</Formula> и просит помочь ей написать</Line>
                    <Line>программу.</Line>
                  </Para>
                  <Box $mt={10}>
                    <Field>
                      <Label>Входные данные</Label>
                      <Value>Два числа <Formula>L,'R~(L⩽R;'1⩽L⩽10^;'R−L⩽500)</Formula>.</Value>
                    </Field>
                    <Field>
                      <Label>Результат работы</Label>
                      <Value>Сумма <Formula>p(i)</Formula> для всех <Formula>L⩽i⩽R</Formula>.</Value>
                    </Field>
                  </Box>
                  <Title $mt={20} $ls={-1.5}>Примеры</Title>
                  <Box $mt={14}>
                    <Field><Label>Входные данные</Label><Value>2 5</Value></Field>
                    <Field><Label>Результат работы</Label><Value>15</Value></Field>
                  </Box>
                  <Title $mt={20} $ls={-0.9}>Сдать решение</Title>
                  <Controls>
                    <Input>
                      <Selected>NodeJS</Selected>
                      <Chevron><svg width="12" height="9" viewBox="0 0 12 9"><path d="M1.500 1.500L6 6.500l4.500-5" fill="none" stroke="#00a9ee" strokeWidth="2.600" /></svg></Chevron>
                    </Input>
                    <Input>
                      <FileButton><svg width="12" height="10" viewBox="0 0 12 10"><path d="M.7.900h3.600l1 1.300h6v7H.7z" fill="none" stroke="#2bb5ee" strokeWidth="1.300" /></svg></FileButton>
                    </Input>
                  </Controls>
                  <Hint>или введите код ниже</Hint>
                  <Editor><EditorPanel /></Editor>
                </Article>
                <Menu>
                  <MenuItem>Экзамены</MenuItem>
                  <MenuItem $on>Задачи</MenuItem>
                  <MenuItem>Помощь</MenuItem>
                  <MenuItem>A + B</MenuItem>
                </Menu>
              </Site>
              <Scroll><Tri $up /><Thumb /><Tri /></Scroll>
            </View>
          </Browser>
        </Body>
      </Screen>
    </>
  );
}
